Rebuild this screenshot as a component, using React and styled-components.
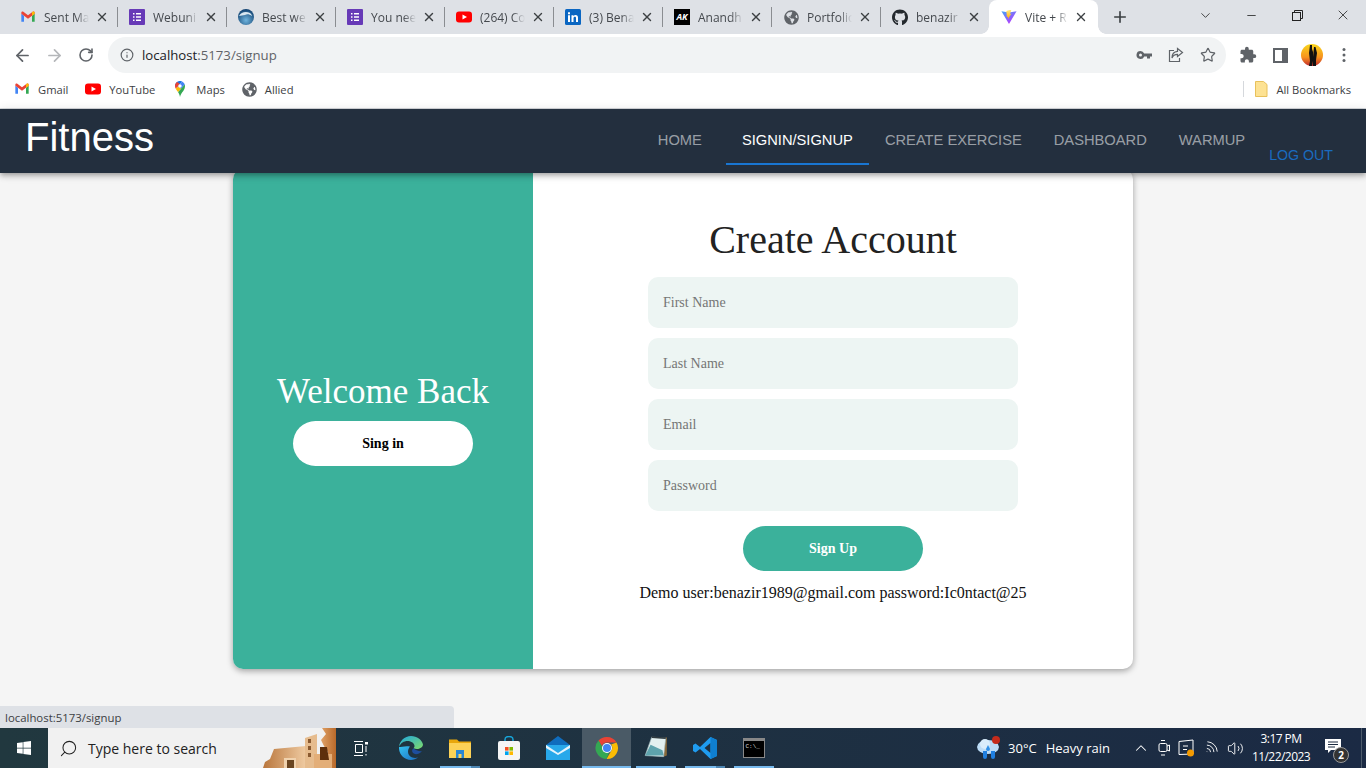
import React from 'react';
import styled, { createGlobalStyle, css } from 'styled-components';
import { FaGithub, FaGlobeAmericas, FaWindows } from 'react-icons/fa';
import { MdExtension } from 'react-icons/md';
import {
  ArrowLeft, ArrowRight, RotateCw, Info, Star, Plus, X, ChevronDown, Minus, ChevronUp, Search, Volume2, Wifi,
} from 'lucide-react';

const GlobalStyle = createGlobalStyle`
  html, body { margin: 0; padding: 0; height: 100%; overflow: hidden; }
  #root { height: 100%; }
  * { box-sizing: border-box; }
`;

const GmailIcon = ({ size = 16 }) => (
  <svg width={size} height={size} viewBox="0 0 24 24">
    <path d="M2 7v12h4V10z" fill="#4285f4" />
    <path d="M18 10v9h4V7z" fill="#34a853" />
    <path d="M2 7l4 3 6 4.500 6-4.500 4-3V5.500C22 4 20.300 3.200 19 4.100L12 9.300 5 4.100C3.700 3.200 2 4 2 5.500z" fill="#ea4335" />
    <path d="M18 10l4-3V5.500C22 4 20.300 3.200 19 4.100L18 5z" fill="#fbbc04" />
  </svg>
);

const FormsIcon = () => (
  <svg width="16" height="16" viewBox="0 0 16 16">
    <rect width="16" height="16" rx="1" fill="#673ab7" />
    <path d="M4 4h1.500v1.500H4zM7 4h5v1.500H7zM4 7.200h1.500v1.500H4zM7 7.200h5v1.500H7zM4 10.500h1.500V12H4zM7 10.500h5V12H7z" fill="#fff" />
  </svg>
);

const EarthIcon = () => (
  <svg width="16" height="16" viewBox="0 0 16 16">
    <defs>
      <radialGradient id="earth" cx="0.5" cy="0.7" r="0.7">
        <stop offset="0" stopColor="#6fb4de" />
        <stop offset="1" stopColor="#0f3f6e" />
      </radialGradient>
    </defs>
    <circle cx="8" cy="8" r="8" fill="url(#earth)" />
    <path d="M1 7c2-4 7-5 11-3 1 1 2 2 2 3-3-2-5-2-7-1-2 0-4 1-6 1z" fill="#d9e7f0" />
  </svg>
);

const YoutubeIcon = () => (
  <svg width="16" height="16" viewBox="0 0 16 16">
    <rect y="2.500" width="16" height="11" rx="3" fill="#f00" />
    <path d="M6.500 5.500v5L11 8z" fill="#fff" />
  </svg>
);

const LinkedinIcon = () => (
  <svg width="16" height="16" viewBox="0 0 16 16">
    <rect width="16" height="16" rx="1.500" fill="#0a66c2" />
    <path d="M3 6.200h2V13H3zM3 3.200h2v2H3zM6.500 6.200h2v1c.5-.8 1.200-1.200 2.100-1.200 1.600 0 2.400 1 2.400 2.800V13h-2V9.200c0-.9-.4-1.400-1.200-1.400s-1.300.6-1.300 1.500V13h-2z" fill="#fff" />
  </svg>
);

const AkIcon = () => <AkBox>AK</AkBox>;

const ViteIcon = () => (
  <svg width="18" height="18" viewBox="0 0 18 18">
    <defs>
      <linearGradient id="viteBody" x1="0" y1="0" x2="0.7" y2="1">
        <stop offset="0" stopColor="#41a6f6" />
        <stop offset="1" stopColor="#bd34fe" />
      </linearGradient>
      <linearGradient id="viteBolt" x1="0" y1="0" x2="0" y2="1">
        <stop offset="0" stopColor="#ffea83" />
        <stop offset="1" stopColor="#ffa800" />
      </linearGradient>
    </defs>
    <path d="M0.500 2.500L9 17 17.500 2.500 9 4z" fill="url(#viteBody)" />
    <path d="M9.500 1L6 2.200 6.600 9 8 8.600 7.700 11.500 11.800 5.200 10 5.600 11.600 1z" fill="url(#viteBolt)" />
  </svg>
);

const MapsIcon = () => (
  <svg width="16" height="16" viewBox="0 0 16 16">
    <path d="M8 0C5.200 0 3 2.200 3 5l2 1 3-3 2-2.600C9.400 0.100 8.700 0 8 0z" fill="#1a73e8" />
    <path d="M3 5c0 1 .3 2 .8 2.800L8 3 5 1.100C3.800 2 3 3.400 3 5z" fill="#ea4335" />
    <path d="M10 .4L6 5.600 8.800 8 12.800 3.500C12.200 2 11.200 1 10 .4z" fill="#4285f4" />
    <path d="M12.800 3.500L6 11c.8 1.300 1.500 2.500 2 5 .5-2.700 1.900-4.200 3.300-6.100C12.300 8.500 13 6.900 13 5c0-.5-.1-1-.2-1.500z" fill="#34a853" />
    <path d="M3.800 7.800C4.400 9 5.300 10 6 11l3-3.400L6 5.600z" fill="#fbbc04" />
    <circle cx="8" cy="5" r="1.700" fill="#fff" />
  </svg>
);

const TABS = [
  { title: 'Sent Ma', icon: <GmailIcon /> },
  { title: 'Webuni', icon: <FormsIcon /> },
  { title: 'Best we', icon: <EarthIcon /> },
  { title: 'You nee', icon: <FormsIcon /> },
  { title: '(264) Co', icon: <YoutubeIcon /> },
  { title: '(3) Bena', icon: <LinkedinIcon /> },
  { title: 'Anandh', icon: <AkIcon /> },
  { title: 'Portfolio', icon: <FaGlobeAmericas size={15} color="#5f6368" /> },
  { title: 'benazir', icon: <FaGithub size={17} color="#24292e" />, beforeActive: true },
  { title: 'Vite + R', icon: <ViteIcon />, active: true },
];

const BOOKMARKS = [
  { title: 'Gmail', icon: <GmailIcon /> },
  { title: 'YouTube', icon: <YoutubeIcon /> },
  { title: 'Maps', icon: <MapsIcon /> },
  { title: 'Allied', icon: <FaGlobeAmericas size={15} color="#5f6368" /> },
];

const NAV_ITEMS = ['Home', 'Signin/Signup', 'Create Exercise', 'Dashboard', 'Warmup'];

function App() {
  return (
    <Screen>
      <GlobalStyle />
      <TabStrip>
        {TABS.map((tab) => (
          <Tab key={tab.title} $active={tab.active} $plain={tab.beforeActive}>
            <TabIcon>{tab.icon}</TabIcon>
            <TabTitle>{tab.title}</TabTitle>
            <X size={14} strokeWidth={2.4} color="#3c4043" />
          </Tab>
        ))}
        <NewTab><Plus size={18} strokeWidth={2.2} color="#3c4043" /></NewTab>
        <WindowControls>
          <WindowButton><ChevronDown size={15} strokeWidth={1.3} color="#222" /></WindowButton>
          <WindowButton><Minus size={13} strokeWidth={1.5} color="#222" /></WindowButton>
          <WindowButton>
            <svg width="11" height="11" viewBox="0 0 11 11" fill="none" stroke="#222">
              <rect x="0.500" y="2.500" width="8" height="8" />
              <path d="M2.500 2.500v-2h8v8h-2" />
            </svg>
          </WindowButton>
          <WindowButton><X size={16} strokeWidth={1.2} color="#222" /></WindowButton>
        </WindowControls>
      </TabStrip>

      <Toolbar>
        <ToolButton><ArrowLeft size={19} strokeWidth={2.2} color="#5f6368" /></ToolButton>
        <ToolButton><ArrowRight size={19} strokeWidth={2.2} color="#b5b7ba" /></ToolButton>
        <ToolButton><RotateCw size={16} strokeWidth={2.4} color="#5f6368" /></ToolButton>
        <Omnibox>
          <Info size={14} strokeWidth={2} color="#5f6368" />
          <Url>localhost<UrlRest>:5173/signup</UrlRest></Url>
          <OmniActions>
            <svg width="16" height="16" viewBox="0 0 16 16" fill="#5f6368">
              <path d="M4.500 4a4 4 0 0 1 3.700 2.500H16v3h-2v2h-3v-2H8.200A4 4 0 1 1 4.500 4zm0 2.500a1.500 1.500 0 1 0 0 3 1.500 1.500 0 0 0 0-3z" />
            </svg>
            <svg width="16" height="16" viewBox="0 0 16 16" fill="none" stroke="#5f6368" strokeWidth="1.200">
              <path d="M6 3.500H1.500v11h10V11M9.500 1.500L14.500 5.500 9.500 9.500V7.300C6.800 7.300 5 8.500 4 11c0-3.600 2-6.300 5.500-6.600z" />
            </svg>
            <Star size={16} strokeWidth={1.8} color="#5f6368" />
          </OmniActions>
        </Omnibox>
        <ProfileTools>
          <ProfileSlot><MdExtension size={18} color="#5f6368" /></ProfileSlot>
          <ProfileSlot>
            <svg width="15" height="15" viewBox="0 0 15 15" fill="none">
              <rect x="1" y="1" width="13" height="13" stroke="#5f6368" strokeWidth="2" />
              <rect x="9" y="1" width="5" height="13" fill="#5f6368" />
            </svg>
          </ProfileSlot>
          <ProfileSlot>
            <svg width="22" height="22" viewBox="0 0 22 22">
              <defs>
                <linearGradient id="sunset" x1="0" y1="0" x2="0" y2="1">
                  <stop offset="0" stopColor="#f9d71c" />
                  <stop offset="0.600" stopColor="#f7931e" />
                  <stop offset="1" stopColor="#c1272d" />
                </linearGradient>
              </defs>
              <circle cx="11" cy="11" r="11" fill="url(#sunset)" />
              <path d="M9 1h2v4l1 3v9l-1 5H8l1-5-1-8zM13 3h1.500l1.500 6-1 7v6h-3v-9z" fill="#111" />
            </svg>
          </ProfileSlot>
          <ProfileSlot>
            <svg width="4" height="16" viewBox="0 0 4 16" fill="#5f6368">
              <circle cx="2" cy="2.500" r="1.500" />
              <circle cx="2" cy="8" r="1.500" />
              <circle cx="2" cy="13.500" r="1.500" />
            </svg>
          </ProfileSlot>
        </ProfileTools>
      </Toolbar>

      <BookmarksBar>
        {BOOKMARKS.map((bookmark) => (
          <Bookmark key={bookmark.title}>
            {bookmark.icon}
            <span>{bookmark.title}</span>
          </Bookmark>
        ))}
        <AllBookmarks>
          <svg width="14" height="16" viewBox="0 0 14 16">
            <path d="M1.500 .5h8l3.500 3V15.500H1.500z" fill="#fde293" stroke="#e8c15b" />
          </svg>
          <span>All Bookmarks</span>
        </AllBookmarks>
      </BookmarksBar>

      <Page>
        <NavBar>
          <Brand>Fitness</Brand>
          <NavLinks>
            {NAV_ITEMS.map((item) => (
              <NavLink key={item} $active={item === 'Signin/Signup'}>{item}</NavLink>
            ))}
            <LogOut>Log out</LogOut>
          </NavLinks>
        </NavBar>
        <Main>
          <Card>
            <WelcomePanel>
              <WelcomeTitle>Welcome Back</WelcomeTitle>
              <PillButton $light>Sing in</PillButton>
            </WelcomePanel>
            <FormPanel>
              <FormTitle>Create Account</FormTitle>
              <Field placeholder="First Name" />
              <Field placeholder="Last Name" />
              <Field placeholder="Email" />
              <Field placeholder="Password" />
              <PillButton>Sign Up</PillButton>
              <DemoNote>Demo user:benazir1989@gmail.com password:Ic0ntact@25</DemoNote>
            </FormPanel>
          </Card>
          <StatusBubble>localhost:5173/signup</StatusBubble>
        </Main>
      </Page>

      <Taskbar>
        <StartButton><FaWindows size={16} color="#fff" /></StartButton>
        <SearchBox>
          <Search size={19} strokeWidth={1.3} color="#222" style={{ transform: 'scaleX(-1)' }} />
          <span>Type here to search</span>
          <SearchArt>
            <svg width="74" height="40" viewBox="0 0 74 40">
              <defs>
                <linearGradient id="mound" x1="0" y1="0" x2="1" y2="0">
                  <stop offset="0" stopColor="#b9763c" />
                  <stop offset="1" stopColor="#efcba2" />
                </linearGradient>
                <linearGradient id="rock" x1="0" y1="0" x2="1" y2="0">
                  <stop offset="0" stopColor="#e0a268" />
                  <stop offset="1" stopColor="#b8692a" />
                </linearGradient>
              </defs>
              <path d="M60 0H74V40H66V24L62 18 59 12 64 6z" fill="url(#rock)" />
              <path d="M1 40L3 34 8 31 12 21 44 18V40z" fill="url(#mound)" />
              <path d="M43 10L55 6V40H43z" fill="#e6bc8e" />
              <path d="M46 11h3v4h-3zM46 18h3v4h-3zM46 25h3v4h-3z" fill="#8a5a30" />
              <path d="M22 30h12v10H22z" fill="#f0d2ae" />
              <path d="M25 32h7v8h-7z" fill="#6a4520" />
              <path d="M52 26h18v14H52z" fill="#e3ae78" />
              <path d="M58 19h7l2 13h-9z" fill="#5e2f0c" />
            </svg>
          </SearchArt>
        </SearchBox>
        <TaskItem $wide>
          <svg width="16" height="15" viewBox="0 0 16 15" fill="none" stroke="#fff">
            <path d="M1 .5h9M1 14.500h9M2.500 3.500h7v8h-7zM13 5v6M13 13v1.500" />
            <rect x="12" y="1" width="3" height="2.500" fill="#fff" stroke="none" />
          </svg>
        </TaskItem>
        <TaskItem>
          <svg width="24" height="24" viewBox="0 0 24 24">
            <defs>
              <linearGradient id="edgeA" x1="0" y1="0" x2="1" y2="1">
                <stop offset="0" stopColor="#35c1f1" />
                <stop offset="1" stopColor="#1b6fc2" />
              </linearGradient>
              <linearGradient id="edgeB" x1="0" y1="0" x2="1" y2="1">
                <stop offset="0" stopColor="#1fa7e0" />
                <stop offset="1" stopColor="#7fdc6a" />
              </linearGradient>
            </defs>
            <path d="M12 0C5.500 0 .5 5 0 11c1.500-4 5-6 8.500-6 4 0 7 2.500 7 5 0 1-.5 1.800-1 2.200 2 .8 4 1 6 .2 2-.8 3.500-2 3.500-4C23 4 18 0 12 0z" fill="url(#edgeB)" />
            <path d="M0 11c-.5 7 5 13 12 13 2.500 0 5-1 7-2.500-5 1.500-10-1-10-6 0-2.500 1-3.500 2-5-4-1-9 .5-11 .5z" fill="url(#edgeA)" />
            <path d="M14.500 12.200c-1.500 1-2 3-.5 4.800 2 2 6 1.500 9-2-2 .5-5 .2-8.500-2.800z" fill="#1e4e9e" />
          </svg>
        </TaskItem>
        <TaskItem $open $stacked>
          <svg width="22" height="20" viewBox="0 0 22 20">
            <path d="M0 1.500h8l2 2h12V6H0z" fill="#e8a70c" />
            <rect y="5" width="22" height="15" fill="#fcd257" />
            <path d="M7 20v-8h8v8h-2.500v-4h-3v4z" fill="#2a86d3" />
          </svg>
        </TaskItem>
        <TaskItem>
          <svg width="22" height="24" viewBox="0 0 22 24">
            <path d="M7 6V3.500C7 1.800 8.500.500 11 .500s4 1.300 4 3V6" fill="none" stroke="#17a4d8" strokeWidth="1.500" />
            <rect y="5" width="22" height="19" rx="2" fill="#f5f5f5" />
            <path d="M7 11h3.600v3.600H7z" fill="#f25022" />
            <path d="M11.400 11H15v3.600h-3.600z" fill="#7fba00" />
            <path d="M7 15.400h3.600V19H7z" fill="#00a4ef" />
            <path d="M11.400 15.400H15V19h-3.600z" fill="#ffb900" />
          </svg>
        </TaskItem>
        <TaskItem>
          <svg width="24" height="24" viewBox="0 0 24 24">
            <path d="M0 9L12 0l12 9v15H0z" fill="#0f6cbd" />
            <rect y="9" width="24" height="15" fill="#28a8ea" />
            <path d="M0 9l12 8 12-8v3l-12 7-12-7z" fill="#e6f4fc" />
          </svg>
        </TaskItem>
        <TaskItem $open $current>
          <svg width="24" height="24" viewBox="0 0 24 24">
            <path d="M12 1a11 11 0 0 1 9.500 5.500H12a5.500 5.500 0 0 0-5.200 3.700L3.500 4.500A11 11 0 0 1 12 1z" fill="#ea4335" />
            <path d="M21.500 6.500A11 11 0 0 1 11.500 23l4.800-8.200a5.500 5.500 0 0 0-.2-6.300z" fill="#fbbc04" />
            <path d="M11.500 23A11 11 0 0 1 3.500 4.500l5 8.500a5.500 5.500 0 0 0 6 2.300z" fill="#34a853" />
            <circle cx="12" cy="12" r="5" fill="#fff" />
            <circle cx="12" cy="12" r="4" fill="#4285f4" />
          </svg>
        </TaskItem>
        <TaskItem $open>
          <svg width="26" height="26" viewBox="0 0 24 24">
            <path d="M22 2v17l-3 1V3z" fill="#8a6a3a" />
            <path d="M8 2l13 1-2 17-17-1z" fill="#e3f0f0" stroke="#9db8bc" strokeWidth="0.600" />
            <path d="M7 9l-5 10h17l-1-5z" fill="#5ea3ad" />
            <path d="M8 2l13 1" stroke="#2f3a40" strokeWidth="1.500" />
          </svg>
        </TaskItem>
        <TaskItem $open $stacked>
          <svg width="24" height="24" viewBox="0 0 24 24">
            <path d="M17.500 1L24 4v16l-6.500 3L7 13l-4.500 3.500L0 15V9l2.500-1.500L7 11zM17.500 7L11.500 12l6 5z" fill="#1f9cf0" />
            <path d="M17.500 1L24 4v16l-6.500 3z" fill="#0f7fd0" />
          </svg>
        </TaskItem>
        <TaskItem $open>
          <Console>C:\_</Console>
        </TaskItem>
        <Tray>
          <Weather>
            <svg width="26" height="26" viewBox="0 0 26 26">
              <ellipse cx="12" cy="12" rx="11" ry="7" fill="#bcdcf7" />
              <circle cx="9" cy="9" r="5" fill="#d9ecfb" />
              <path d="M7 16h4v6a2 2 0 0 1-4 0zM15 16h4v6a2 2 0 0 1-4 0z" fill="#1f7fe0" />
              <path d="M12 10l2 4a2 2 0 0 1-4 0z" fill="#2f8fe8" />
              <circle cx="20" cy="5" r="4" fill="#c42b1c" />
            </svg>
            <span>30°C</span>
            <span>Heavy rain</span>
          </Weather>
          <TrayIcons>
            <ChevronUp size={18} strokeWidth={1.4} color="#fff" />
            <svg width="12" height="18" viewBox="0 0 12 18" fill="none" stroke="#fff">
              <rect x="1" y="4.500" width="8" height="8" rx="1.500" />
              <path d="M9 7l2.500-1v6L9 11M3 1.500h4M3 16h4" />
            </svg>
            <svg width="17" height="18" viewBox="0 0 17 18">
              <path d="M1 2.500L15 1v14L1 15.500z" fill="none" stroke="#fff" />
              <path d="M5 7h5M5 10.500h4" stroke="#fff" />
              <circle cx="12.500" cy="14" r="3.500" fill="#f59b00" />
            </svg>
            <Wifi size={16} strokeWidth={1.3} color="#fff" style={{ transform: 'rotate(45deg)' }} />
            <Volume2 size={17} strokeWidth={1.3} color="#fff" />
          </TrayIcons>
          <Clock>
            <span>3:17 PM</span>
            <span>11/22/2023</span>
          </Clock>
          <Notifications>
            <svg width="16" height="14" viewBox="0 0 16 14">
              <path d="M0 0h16v11H6l-3 3v-3H0z" fill="#fff" />
              <path d="M3 3h10M3 5.500h10M3 8h7" stroke="#1c2b40" />
            </svg>
            <NotificationCount>2</NotificationCount>
          </Notifications>
        </Tray>
      </Taskbar>
    </Screen>
  );
}

const Screen = styled.div`
  height: 768px;
  display: flex;
  flex-direction: column;
  overflow: hidden;
  font-family: "Open Sans", sans-serif;
  background: #f5f5f5;
`;

const TabStrip = styled.div`
  height: 34px;
  flex: none;
  display: flex;
  align-items: flex-end;
  padding-left: 8px;
  background: #dee1e6;
`;

const activeTab = css`
  background: #fff;
  padding-right: 10px;

  &::before,
  &::after {
    content: '';
    position: absolute;
    bottom: 0;
    width: 8px;
    height: 8px;
  }

  &::before {
    left: -8px;
    background: radial-gradient(circle at 0 0, transparent 7.5px, #fff 8px);
  }

  &::after {
    right: -8px;
    background: radial-gradient(circle at 100% 0, transparent 7.5px, #fff 8px);
  }
`;

const Tab = styled.div`
  width: 109px;
  height: 34px;
  flex: none;
  display: flex;
  align-items: center;
  padding: 0 8px 0 12px;
  position: relative;
  border-radius: 8px 8px 0 0;

  ${(p) => !p.$active && !p.$plain && css`
    &::after {
      content: '';
      position: absolute;
      right: -1px;
      top: 7px;
      height: 20px;
      width: 1px;
      background: #8a8d91;
    }
  `}

  ${(p) => p.$active && activeTab}
`;

const TabIcon = styled.div`
  width: 16px;
  height: 18px;
  flex: none;
  display: flex;
  align-items: center;
  justify-content: center;
`;

const TabTitle = styled.div`
  flex: 1;
  min-width: 0;
  margin: 0 6px 0 8px;
  white-space: nowrap;
  font-size: 12px;
  color: #45494e;
  mask-image: linear-gradient(to right, #000 72%, transparent 100%);
`;

const AkBox = styled.div`
  width: 16px;
  height: 16px;
  background: #000;
  color: #fff;
  font-size: 9px;
  font-weight: 700;
  font-style: italic;
  line-height: 16px;
  text-align: center;
`;

const NewTab = styled.div`
  width: 44px;
  height: 34px;
  display: flex;
  align-items: center;
  justify-content: center;
`;

const WindowControls = styled.div`
  margin-left: auto;
  height: 30px;
  align-self: flex-start;
  display: flex;
`;

const WindowButton = styled.div`
  width: 46px;
  height: 30px;
  display: flex;
  align-items: center;
  justify-content: center;
`;

const Toolbar = styled.div`
  height: 42px;
  flex: none;
  display: flex;
  align-items: center;
  padding-left: 6px;
  background: #fff;
`;

const ToolButton = styled.div`
  width: 32px;
  height: 32px;
  display: flex;
  align-items: center;
  justify-content: center;
`;

const Omnibox = styled.div`
  width: 1118px;
  height: 36px;
  margin-left: 6px;
  display: flex;
  align-items: center;
  padding: 0 10px 0 12px;
  border-radius: 18px;
  background: #f1f3f4;
`;

const Url = styled.div`
  margin-left: 8px;
  font-size: 13.2px;
  color: #202124;
`;

const UrlRest = styled.span`
  color: #5f6368;
`;

const OmniActions = styled.div`
  margin-left: auto;
  display: flex;
  align-items: center;
  gap: 16px;
`;

const ProfileTools = styled.div`
  margin-left: 6px;
  display: flex;
  align-items: center;
`;

const ProfileSlot = styled.div`
  width: 32px;
  display: flex;
  align-items: center;
  justify-content: center;
`;

const BookmarksBar = styled.div`
  height: 33px;
  flex: none;
  display: flex;
  align-items: center;
  gap: 17px;
  padding: 0 15px 6px 14px;
  background: #fff;
  border-bottom: 1px solid #d5d8dc;
`;

const Bookmark = styled.div`
  display: flex;
  align-items: center;
  gap: 8px;
  font-size: 11.2px;
  color: #3c4043;
`;

const AllBookmarks = styled(Bookmark)`
  margin-left: auto;
  padding-left: 10px;
  border-left: 1px solid #d5d8dc;
`;

const Page = styled.div`
  flex: 1;
  min-height: 0;
  display: flex;
  flex-direction: column;
`;

const NavBar = styled.header`
  height: 64px;
  flex: none;
  display: flex;
  justify-content: space-between;
  padding: 0 25px;
  position: relative;
  z-index: 2;
  background: #232f3e;
  box-shadow: 0 2px 4px -1px rgba(0, 0, 0, 0.2), 0 4px 5px rgba(0, 0, 0, 0.14), 0 1px 10px rgba(0, 0, 0, 0.12);
`;

const Brand = styled.div`
  font-family: "Liberation Sans", sans-serif;
  font-size: 40px;
  line-height: 56px;
  color: #fff;
`;

const NavLinks = styled.nav`
  display: flex;
  align-items: flex-start;
`;

const NavLink = styled.div`
  height: 56px;
  padding: 0 16px;
  margin-left: ${(p) => (p.$active ? '8px' : '0')};
  font-family: "Liberation Sans", sans-serif;
  font-size: 14.7px;
  line-height: 62px;
  text-transform: uppercase;
  color: ${(p) => (p.$active ? '#fff' : 'rgba(255, 255, 255, 0.55)')};
  border-bottom: 2px solid ${(p) => (p.$active ? '#1976d2' : 'transparent')};
`;

const LogOut = styled.div`
  margin: 36px 8px 0 8px;
  font-family: "Liberation Sans", sans-serif;
  font-size: 14.2px;
  line-height: 20px;
  text-transform: uppercase;
  color: #1a6bbf;
`;

const Main = styled.main`
  flex: 1;
  min-height: 0;
  position: relative;
  display: flex;
  justify-content: center;
  align-items: flex-start;
`;

const Card = styled.section`
  width: 900px;
  height: 500px;
  margin-top: -4px;
  display: flex;
  overflow: hidden;
  border-radius: 10px;
  background: #fff;
  box-shadow: 0 2px 6px rgba(0, 0, 0, 0.35);
  font-family: "Liberation Serif", serif;
`;

const WelcomePanel = styled.div`
  width: 300px;
  padding-top: 203px;
  display: flex;
  flex-direction: column;
  align-items: center;
  background: #3bb19b;
`;

const WelcomeTitle = styled.h1`
  margin: 0 0 9px;
  font-size: 35px;
  font-weight: 400;
  line-height: 40px;
  color: #fff;
`;

const FormPanel = styled.form`
  flex: 1;
  padding-top: 48px;
  display: flex;
  flex-direction: column;
  align-items: center;
`;

const FormTitle = styled.h1`
  margin: 0 0 14px;
  font-size: 40px;
  font-weight: 400;
  line-height: 46px;
  color: #222;
`;

const Field = styled.input`
  width: 370px;
  height: 51px;
  margin-bottom: 10px;
  padding: 0 15px;
  border: none;
  border-radius: 10px;
  outline: none;
  background: #edf5f3;
  font-family: "Liberation Serif", serif;
  font-size: 14px;

  &::placeholder {
    color: #757575;
  }
`;

const PillButton = styled.div`
  width: 180px;
  height: 45px;
  margin-top: ${(p) => (p.$light ? '0' : '5px')};
  display: flex;
  align-items: center;
  justify-content: center;
  border-radius: 30px;
  background: ${(p) => (p.$light ? '#fff' : '#3bb19b')};
  color: ${(p) => (p.$light ? '#000' : '#fff')};
  font-size: 14px;
  font-weight: 700;
`;

const DemoNote = styled.p`
  margin: 13px 0 0;
  font-size: 16px;
  line-height: 18px;
  color: #111;
  white-space: nowrap;
`;

const StatusBubble = styled.div`
  position: absolute;
  left: 0;
  bottom: 0;
  width: 454px;
  height: 22px;
  padding: 1px 0 0 5px;
  border-radius: 0 4px 0 0;
  background: #dee1e6;
  font-size: 11.4px;
  line-height: 22px;
  color: #3c4043;
`;

const Taskbar = styled.footer`
  height: 40px;
  flex: none;
  display: flex;
  align-items: stretch;
  background: linear-gradient(to right, #21383f, #1b2a44);
`;

const StartButton = styled.div`
  width: 48px;
  display: flex;
  align-items: center;
  justify-content: center;
`;

const SearchBox = styled.div`
  width: 288px;
  display: flex;
  align-items: center;
  gap: 10px;
  padding-left: 11px;
  position: relative;
  background: #f1f1f1;
  font-size: 14px;
  color: #222;
`;

const SearchArt = styled.div`
  position: absolute;
  right: 0;
  top: 0;
  height: 40px;
`;

const TaskItem = styled.div`
  width: ${(p) => (p.$wide ? '50px' : '49px')};
  flex: none;
  display: flex;
  align-items: center;
  justify-content: center;
  position: relative;
  background: ${(p) => (p.$current ? '#4a5a66' : 'transparent')};

  ${(p) => p.$open && css`
    &::after {
      content: '';
      position: absolute;
      left: ${p.$current ? '0' : '5px'};
      right: ${p.$current ? '0' : '4px'};
      bottom: 0;
      height: 2px;
      background: ${p.$stacked
    ? 'linear-gradient(to right, #76b9ed 77%, #4d86b3 77%)'
    : '#76b9ed'};
    }
  `}
`;

const Console = styled.div`
  width: 22px;
  height: 20px;
  padding: 2px 1px 0 2px;
  border: 1px solid #888;
  border-top-width: 3px;
  background: #000;
  color: #ddd;
  font-family: "Liberation Mono", monospace;
  font-size: 6px;
  line-height: 8px;
`;

const Tray = styled.div`
  margin-left: auto;
  display: flex;
  align-items: center;
  padding-right: 15px;
  color: #fff;
  font-size: 13px;
  position: relative;

  &::after {
    content: '';
    position: absolute;
    right: 4px;
    top: 0;
    bottom: 0;
    width: 1px;
    background: #4d5b6b;
  }
`;

const Weather = styled.div`
  display: flex;
  align-items: center;
  gap: 6px;
  margin-right: 22px;

  span + span {
    margin-left: 3px;
  }
`;

const TrayIcons = styled.div`
  display: flex;
  align-items: center;
  gap: 8px;
`;

const Clock = styled.div`
  width: 66px;
  margin: 0 1px 0 4px;
  display: flex;
  flex-direction: column;
  align-items: center;
  font-size: 12px;
  letter-spacing: -0.55px;
  line-height: 18px;
`;

const Notifications = styled.div`
  width: 36px;
  height: 40px;
  padding-bottom: 5px;
  display: flex;
  align-items: center;
  justify-content: center;
  position: relative;
`;

const NotificationCount = styled.div`
  position: absolute;
  right: 2px;
  bottom: 5px;
  width: 16px;
  height: 16px;
  border-radius: 50%;
  border: 1px solid #999;
  background: #333;
  font-size: 10px;
  font-weight: 700;
  line-height: 14px;
  text-align: center;
`;

export default App;
